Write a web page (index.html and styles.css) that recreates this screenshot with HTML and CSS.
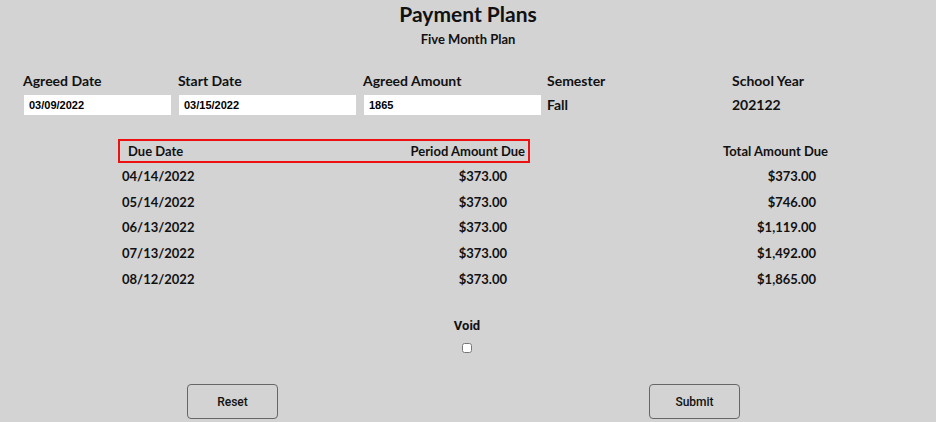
FILE: index.html
```html
<!DOCTYPE html>
<html lang="en">
<head>
<meta charset="utf-8">
<title>Payment Plans</title>
<link rel="stylesheet" href="styles.css">
</head>
<body>
<div class="page">
  <header class="titles">
    <h1 class="title">Payment Plans</h1>
    <h2 class="subtitle">Five Month Plan</h2>
  </header>

  <section class="fields">
    <div class="field">
      <label class="field-label" for="agreed-date">Agreed Date</label>
      <input class="field-input w1" id="agreed-date" type="text" value="03/09/2022">
    </div>
    <div class="field">
      <label class="field-label" for="start-date">Start Date</label>
      <input class="field-input w2" id="start-date" type="text" value="03/15/2022">
    </div>
    <div class="field">
      <label class="field-label" for="agreed-amount">Agreed Amount</label>
      <input class="field-input w2" id="agreed-amount" type="text" value="1865">
    </div>
    <div class="field">
      <span class="field-label">Semester</span>
      <span class="field-value">Fall</span>
    </div>
    <div class="field">
      <span class="field-label">School Year</span>
      <span class="field-value">202122</span>
    </div>
  </section>

  <section class="schedule">
    <div class="row head">
      <div class="highlight">
        <span>Due Date</span>
        <span>Period Amount Due</span>
      </div>
      <div class="total-head">Total Amount Due</div>
    </div>
    <div class="row">
      <div class="period"><span class="date">04/14/2022</span><span class="amt">$373.00</span></div>
      <div class="total">$373.00</div>
    </div>
    <div class="row">
      <div class="period"><span class="date">05/14/2022</span><span class="amt">$373.00</span></div>
      <div class="total">$746.00</div>
    </div>
    <div class="row">
      <div class="period"><span class="date">06/13/2022</span><span class="amt">$373.00</span></div>
      <div class="total">$1,119.00</div>
    </div>
    <div class="row">
      <div class="period"><span class="date">07/13/2022</span><span class="amt">$373.00</span></div>
      <div class="total">$1,492.00</div>
    </div>
    <div class="row">
      <div class="period"><span class="date">08/12/2022</span><span class="amt">$373.00</span></div>
      <div class="total">$1,865.00</div>
    </div>
  </section>

  <section class="void">
    <label class="void-label" for="void">Void</label>
    <input class="void-box" id="void" type="checkbox">
  </section>

  <section class="actions">
    <button class="btn btn-reset" type="button">Reset</button>
    <button class="btn btn-submit" type="button">Submit</button>
  </section>
</div>
</body>
</html>
```

FILE: styles.css
```css
html, body {
  margin: 0;
  padding: 0;
  background: #d3d3d3;
}

body {
  font-family: Lato, "DejaVu Sans", sans-serif;
  font-weight: 700;
  color: #111;
  width: 936px;
  height: 422px;
  overflow: hidden;
}

.page {
  display: flex;
  flex-direction: column;
}

.titles {
  display: flex;
  flex-direction: column;
  align-items: center;
  padding-top: 2px;
}

.title {
  margin: 0;
  font-size: 21px;
  line-height: 24px;
  font-weight: 700;
}

.subtitle {
  margin: 0;
  margin-top: 5px;
  font-size: 13px;
  line-height: 16px;
  font-weight: 700;
}

.fields {
  display: grid;
  grid-template-columns: 155px 185px 184px 185px 1fr;
  padding-left: 23px;
  margin-top: 26px;
}

.field {
  display: flex;
  flex-direction: column;
  gap: 6px;
}

.field-label {
  font-size: 14px;
  line-height: 16px;
}

.field-input {
  box-sizing: border-box;
  height: 20px;
  margin: 0 0 0 1px;
  padding: 0 0 0 5px;
  border: none;
  background: #fff;
  font-family: "Liberation Sans", Arial, sans-serif;
  font-weight: 700;
  font-size: 11px;
  color: #000;
  outline: none;
}

.w1 { width: 147px; }
.w2 { width: 177px; margin-left: 1px; }

.field-value {
  height: 20px;
  line-height: 20px;
  font-size: 14px;
}

.schedule {
  margin-top: 24px;
  margin-left: 118px;
  width: 712px;
  display: flex;
  flex-direction: column;
}

.row {
  display: grid;
  grid-template-columns: 412px 1fr;
  height: 25.7px;
  align-items: center;
  font-size: 13px;
}

.row.head {
  height: 24px;
}

.highlight {
  box-sizing: border-box;
  height: 24px;
  border: 2px solid #ee1111;
  display: flex;
  justify-content: space-between;
  align-items: center;
  padding: 0 3px 0 8px;
}

.total-head {
  text-align: right;
  padding-right: 2px;
}

.period {
  display: flex;
  justify-content: space-between;
  padding: 0 23px 0 4px;
}

.total {
  text-align: right;
  padding-right: 14px;
}

.void {
  display: flex;
  flex-direction: column;
  align-items: center;
  margin-top: 27px;
  font-family: Roboto, "Noto Sans", sans-serif;
}

.void-label {
  font-size: 13px;
  line-height: 16px;
  font-weight: 700;
  margin-left: -2px;
}

.void-box {
  margin: 9px 0 0 -2px;
  width: 10px;
  height: 10px;
}

.actions {
  display: flex;
  margin-top: 31px;
  padding-left: 187px;
  gap: 371px;
}

.btn {
  box-sizing: border-box;
  width: 91px;
  height: 35px;
  border: 1px solid #666;
  border-radius: 4px;
  background: transparent;
  font-family: Roboto, "Noto Sans", sans-serif;
  font-weight: 500;
  font-size: 12px;
  color: #111;
}
```
